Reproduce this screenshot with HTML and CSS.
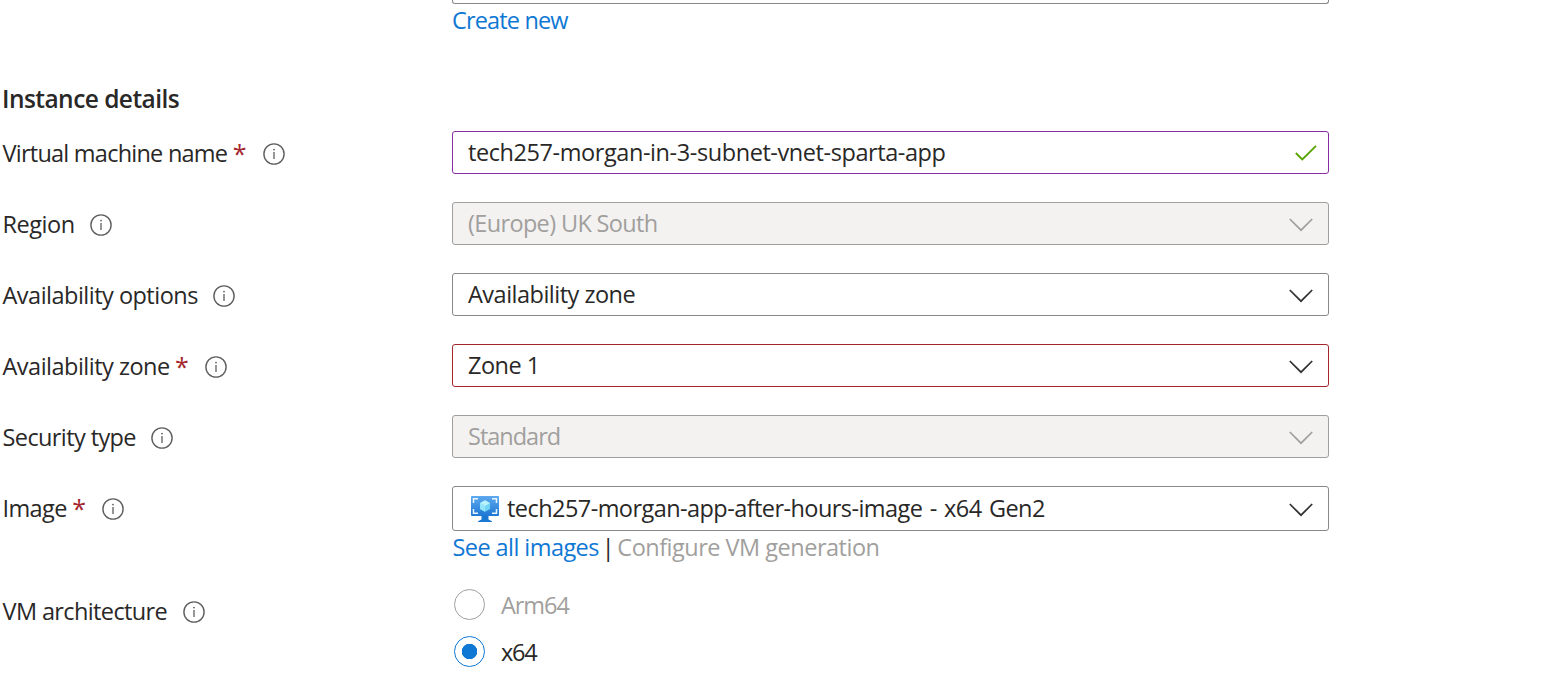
FILE: index.html
```
<!DOCTYPE html>
<html lang="en">
<head>
<meta charset="utf-8">
<title>Create a virtual machine</title>
<link rel="stylesheet" href="styles.css">
</head>
<body>
<svg class="defs" width="0" height="0" aria-hidden="true">
  <defs>
    <symbol id="info" viewBox="0 0 22 22"><circle cx="11" cy="11" r="10.1" fill="none" stroke="currentColor" stroke-width="1.4"/><path d="M11 9v7" stroke="currentColor" stroke-width="1.3"/><circle cx="11" cy="6.6" r=".9" fill="currentColor"/></symbol>
    <symbol id="chevron" viewBox="0 0 24 14"><path d="M.8 1 12 12.2 23.2 1" fill="none" stroke="currentColor" stroke-width="1.7"/></symbol>
    <symbol id="check" viewBox="0 0 22 16"><path d="M.8 8 7.3 14.5 21 .8" fill="none" stroke="currentColor" stroke-width="1.8"/></symbol>
    <linearGradient id="screen" x1="0" y1="1" x2="0" y2="0"><stop offset="0" stop-color="#1f78d4"/><stop offset="1" stop-color="#5ea9ef"/></linearGradient>
  </defs>
</svg>
<main class="form">
  <div class="field-top"></div>
  <a class="link create"><span class="t-create">Create new</span></a>
  <h2 class="heading"><span class="t-heading">Instance details</span></h2>

  <div class="row">
    <div class="label"><span class="t-vmname">Virtual machine name</span><span class="req">*</span><svg class="info"><use href="#info"/></svg></div>
    <div class="box valid"><span class="t-value1">tech257-morgan-in-3-subnet-vnet-sparta-app</span><svg class="check"><use href="#check"/></svg></div>
  </div>
  <div class="row">
    <div class="label"><span class="t-region">Region</span><svg class="info"><use href="#info"/></svg></div>
    <div class="box disabled"><span class="t-value2">(Europe) UK South</span><svg class="chevron"><use href="#chevron"/></svg></div>
  </div>
  <div class="row">
    <div class="label"><span class="t-options">Availability options</span><svg class="info"><use href="#info"/></svg></div>
    <div class="box"><span class="t-value3">Availability zone</span><svg class="chevron"><use href="#chevron"/></svg></div>
  </div>
  <div class="row">
    <div class="label"><span class="t-zone">Availability zone</span><span class="req">*</span><svg class="info"><use href="#info"/></svg></div>
    <div class="box invalid"><span class="t-value4">Zone 1</span><svg class="chevron"><use href="#chevron"/></svg></div>
  </div>
  <div class="row">
    <div class="label"><span class="t-security">Security type</span><svg class="info"><use href="#info"/></svg></div>
    <div class="box disabled"><span class="t-value5">Standard</span><svg class="chevron"><use href="#chevron"/></svg></div>
  </div>
  <div class="row image-row">
    <div class="label"><span class="t-image">Image</span><span class="req">*</span><svg class="info"><use href="#info"/></svg></div>
    <div class="box tall">
      <svg class="vm" viewBox="0 0 30 28">
        <path d="M11.500 20h7v4.500l3.500 1.800V27H8v-.7l3.500-1.800z" fill="#1b78d2"/>
        <rect x="1" y="1" width="28" height="20" rx="1" fill="url(#screen)"/>
        <path d="M3.500 8V3.700H8M22 3.700h4.500V8M26.500 14v4.300H22M8 18.300H3.500V14" fill="none" stroke="#e9f5ff" stroke-width="1.500"/>
        <path d="m15 5.200 5 2.900v5.800l-5 2.900-5-2.900V8.100z" fill="#6fd5f5"/>
        <path d="m15 5.200 5 2.900-5 2.900-5-2.900z" fill="#b9f1fd"/>
        <path d="M10 8.100 15 11v5.800l-5-2.900z" fill="#93e5fa"/>
      </svg>
      <span class="t-value6">tech257-morgan-app-after-hours-image - x64 Gen2</span><svg class="chevron"><use href="#chevron"/></svg>
    </div>
  </div>
  <div class="links"><a class="link t-see">See all images</a><span class="bar">|</span><span class="muted t-config">Configure VM generation</span></div>
  <div class="row arch">
    <div class="label"><span class="t-arch">VM architecture</span><svg class="info"><use href="#info"/></svg></div>
    <div class="radios">
      <div class="radio muted"><span class="dot"></span><span class="t-arm">Arm64</span></div>
      <div class="radio"><span class="dot on"></span><span class="t-x64">x64</span></div>
    </div>
  </div>
</main>
</body>
</html>
```
FILE: styles.css
```
* { box-sizing: border-box; }
body { margin: 0; background: #fff; color: #292827; font: 23.5px/30px "Open Sans", "Noto Sans", sans-serif; }
.defs { display: block; height: 0; }
.form { height: 700px; overflow: hidden; white-space: nowrap; }
.field-top { margin-left: 452px; width: 877px; height: 4px; border: 1px solid #8a8886; border-top: 0; border-radius: 0 0 3px 3px; }
.link { color: #0f78d4; }
.create { display: block; margin: 1px 0 0 452px; height: 30px; }
.heading { margin: 49px 0 0 2px; height: 47px; font-size: 24.5px; line-height: 30px; font-weight: 600; }
.row { display: grid; grid-template-columns: 449.5px 877px; margin-left: 2.5px; height: 71px; align-items: start; }
.label { display: flex; align-items: center; height: 45px; }
.label > span { flex: none; padding-bottom: 1px; }
.req { color: #a4262c; width: 12px; margin-left: 5.5px; font-size: 25px; }
.info { width: 22px; height: 22px; margin-left: 15.5px; color: #605e5c; }
.req + .info { margin-left: 18px; }
.box { display: flex; align-items: center; height: 43px; padding: 0 15px; border: 1px solid #8a8886; border-radius: 3px; }
.box span { line-height: 41px; }
.tall { height: 45px; }
.valid { border-color: #8a2da5; }
.invalid { border-color: #a4262c; }
.disabled { background: #f3f2f1; border-color: #a19f9d; color: #a19f9d; }
.muted { color: #a19f9d; }
.chevron { width: 24px; height: 14px; margin-left: auto; color: #323130; margin-top: 3px; }
.disabled .chevron { color: #a19f9d; }
.check { width: 22px; height: 16px; margin: 0 -4px 0 auto; color: #57a300; }
.vm { width: 30px; height: 28px; margin: 0 7px 0 2px; }
.image-row { height: 46px; }
.links { display: flex; margin-left: 452.5px; height: 30px; }
.bar { width: 18.500px; text-align: center; }
.arch { margin-top: 27px; height: 90px; }
.radios { display: flex; flex-direction: column; gap: 16px; padding-left: 2px; }
.radio { display: flex; align-items: center; gap: 16px; height: 31px; }
.radio span:last-child { padding-top: 1px; }
.dot { width: 31px; height: 31px; border: 1px solid #a19f9d; border-radius: 50%; }
.dot.on { border-color: #0f78d4; background: radial-gradient(circle, #0f78d4 7.5px, transparent 8px); }

/* Tracking per string */
.t-create { letter-spacing: -.85px; }
.t-heading { letter-spacing: -.55px; }
.t-vmname { letter-spacing: -.76px; }
.t-region { letter-spacing: -.45px; }
.t-options, .t-zone, .t-value3 { letter-spacing: -.51px; }
.t-security { letter-spacing: -.6px; }
.t-image { letter-spacing: -.6px; }
.t-arch { letter-spacing: -.62px; }
.t-value1 { letter-spacing: -.42px; padding-bottom: 1px; }
.t-value2 { letter-spacing: -.65px; }
.t-value4 { letter-spacing: -.5px; }
.t-value5 { letter-spacing: -1px; }
.t-value6 { letter-spacing: -.56px; word-spacing: 1.800px; padding-bottom: 1px; }
.t-see { letter-spacing: -.57px; }
.t-config { letter-spacing: -.5px; }
.t-arm { letter-spacing: -1.050px; }
.t-x64 { letter-spacing: -1.300px; }
```
